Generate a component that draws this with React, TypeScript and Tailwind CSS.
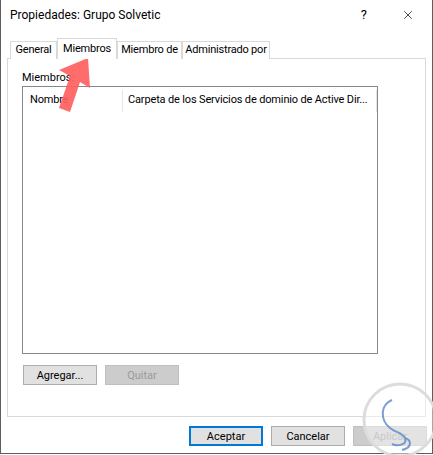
import { X } from "lucide-react";

const tabs = [
  { label: "General", active: false, w: "w-[47px]" },
  { label: "Miembros", active: true, w: "w-[60px]" },
  { label: "Miembro de", active: false, w: "w-[65px]" },
  { label: "Administrado por", active: false, w: "w-[88px]" },
];

const Btn = ({ label, kind }: { label: string; kind?: "default" | "disabled" }) => {
  const base = "w-[74px] h-[20px] flex items-center justify-center text-[11px] leading-none";
  if (kind === "default")
    return <div className={`${base} bg-[#e1e1e1] border-2 border-[#0078d7] text-black`}>{label}</div>;
  if (kind === "disabled")
    return <div className={`${base} bg-[#cccccc] border border-[#bfbfbf] text-[#9a9a9a]`}>{label}</div>;
  return <div className={`${base} bg-[#e1e1e1] border border-[#adadad] text-black`}>{label}</div>;
};

export default function App() {
  return (
    <div className="relative w-[433px] h-[455px] bg-white overflow-hidden" style={{ fontFamily: "Roboto, 'Noto Sans', sans-serif" }}>
      <div className="w-[433px] h-[454px] flex flex-col border-l border-r border-b border-[#5f5f5f]">
        {/* title bar */}
        <div className="h-[30px] flex items-center shrink-0">
          <span className="pl-[9px] text-[12px] text-black">Propiedades: Grupo Solvetic</span>
          <span className="ml-auto mr-[34px] text-[13px] text-black">?</span>
          <X className="mr-[17px] w-[14px] h-[14px] text-black" strokeWidth={1.2} />
        </div>

        {/* tabs */}
        <div className="mt-[8px] px-[9px] flex items-end h-[21px] relative z-10 text-[11px] tracking-[-0.2px] text-black">
          {tabs.map((t) =>
            t.active ? (
              <div key={t.label} className={`${t.w} h-[21px] bg-white border border-b-0 border-[#d9d9d9] flex items-center justify-center whitespace-nowrap`}>
                {t.label}
              </div>
            ) : (
              <div key={t.label} className={`${t.w} h-[18px] bg-white border border-b-0 border-[#d9d9d9] flex items-center justify-center whitespace-nowrap`}>
                {t.label}
              </div>
            )
          )}
        </div>

        {/* panel */}
        <div className="mx-[6px] -mt-px h-[359px] border border-[#d9d9d9] bg-white flex flex-col items-start px-[14px]">
          <div className="mt-[12px] text-[11px] leading-[13px] text-black">Miembros:</div>
          <div className="mt-[2px] w-[356px] h-[268px] border border-[#828790] bg-white">
            <div className="flex h-[25px] items-center text-[11px] tracking-[-0.15px] text-black whitespace-nowrap">
              <div className="w-[100px] pl-[7px] h-[22px] mt-[2px] flex items-center border-r border-[#e5e5e5]">Nombre</div>
              <div className="w-[254px] pl-[5px] h-[22px] mt-[2px] flex items-center border-r border-[#e5e5e5] overflow-hidden">
                Carpeta de los Servicios de dominio de Active Dir...
              </div>
            </div>
          </div>
          <div className="mt-[11px] flex gap-[8px] pl-px">
            <Btn label="Agregar..." />
            <Btn label="Quitar" kind="disabled" />
          </div>
        </div>

        {/* footer buttons */}
        <div className="mt-[9px] flex justify-end gap-[8px] pr-[5px]">
          <Btn label="Aceptar" kind="default" />
          <Btn label="Cancelar" />
          <Btn label="Aplicar" kind="disabled" />
        </div>
      </div>

      {/* red arrow annotation */}
      <svg className="absolute left-0 top-0 pointer-events-none" width="433" height="455">
        <polygon
          points="88,58 90,88 80,82 70,112 59,108 70,76 59,70"
          fill="#ff5f5f"
          fillOpacity="0.92"
        />
      </svg>

      {/* watermark */}
      <svg className="absolute left-0 top-0 pointer-events-none" width="433" height="455">
        <circle cx="400" cy="420" r="36" fill="white" fillOpacity="0.45" stroke="#dcdcdc" strokeWidth="3" />
        <path
          d="M392 400 C 380 405, 380 420, 390 428 C 396 433, 402 432, 405 438 C 408 444, 398 447, 392 444 M405 438 C 412 440, 412 448, 402 450"
          fill="none"
          stroke="#5a86c8"
          strokeOpacity="0.8"
          strokeWidth="2"
        />
      </svg>
    </div>
  );
}
